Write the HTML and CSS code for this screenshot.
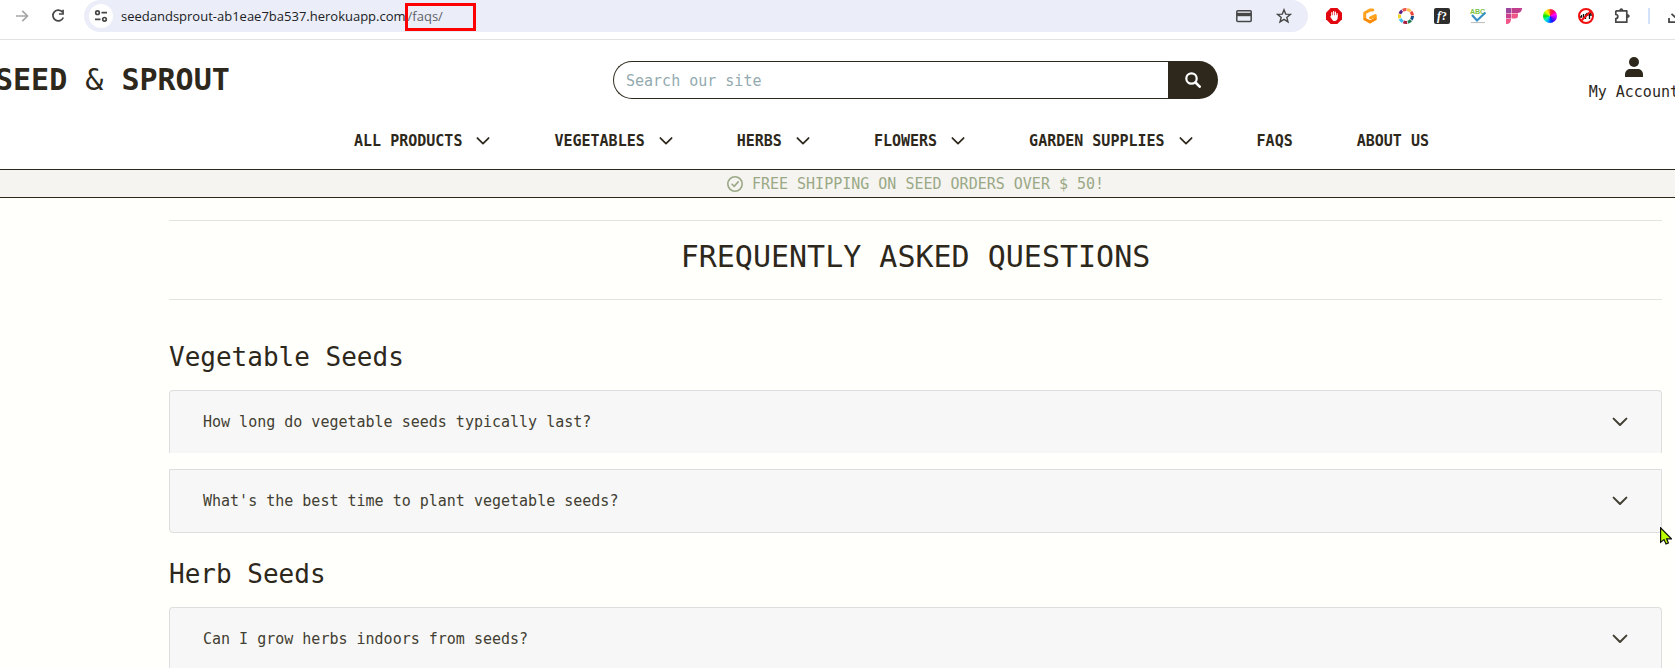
FILE: index.html
```html
<!DOCTYPE html>
<html lang="en">
<head>
<meta charset="utf-8">
<title>FAQs | Seed &amp; Sprout</title>
<link rel="stylesheet" href="styles.css">
</head>
<body>
<svg class="defs" aria-hidden="true">
  <symbol id="chevron" viewBox="0 0 16 16"><path d="M1.600 4.600 8 11l6.400-6.400" fill="none" stroke="currentColor" stroke-width="2" stroke-linecap="round" stroke-linejoin="round"/></symbol>
</svg>
<div class="toolbar">
  <div class="history">
    <button class="tool dim" aria-label="Forward"><svg viewBox="0 0 16 16"><path d="M2 8h11M8.300 2.800 13.500 8l-5.200 5.200" fill="none" stroke="currentColor" stroke-width="1.700"/></svg></button>
    <button class="tool" aria-label="Reload"><svg viewBox="0 0 16 16"><path d="M12.600 4.200A5.400 5.400 0 1 0 13.300 9.500" fill="none" stroke="currentColor" stroke-width="1.700"/><path d="M13.900 1.800v5H8.900V5.200h3.300V1.800z" fill="currentColor"/></svg></button>
  </div>
  <div class="address">
    <button class="site-info" aria-label="Site information"><svg viewBox="0 0 16 16" fill="none" stroke="currentColor" stroke-width="1.700"><circle cx="4.500" cy="4.700" r="1.800"/><path d="M8.500 4.700H14M2 11.300h5.500"/><circle cx="11.500" cy="11.300" r="1.800"/></svg></button>
    <span class="url">seedandsprout-ab1eae7ba537.herokuapp.com<span class="path">/faqs/<span class="marker"></span></span></span>
    <div class="address-actions">
      <button class="tool" aria-label="Payment methods"><svg viewBox="0 0 16 16"><rect x=".8" y="2.800" width="14.400" height="10.800" rx="1" fill="none" stroke="currentColor" stroke-width="1.500"/><path d="M1 4.800h14v3.400H1z" fill="currentColor"/></svg></button>
      <button class="tool" aria-label="Bookmark"><svg viewBox="0 0 16 16"><path d="m8 1.800 1.700 4.300 4.700.3-3.600 3 1.200 4.500L8 11.400l-4 2.500 1.200-4.500-3.600-3 4.700-.3z" fill="none" stroke="currentColor" stroke-width="1.400"/></svg></button>
    </div>
  </div>
  <div class="extensions">
    <button class="tool" aria-label="Ad blocker"><svg viewBox="0 0 16 16"><path d="M4.700 0h6.600L16 4.700v6.600L11.300 16H4.700L0 11.300V4.700z" fill="#e2070f"/><path d="M5.800 8V4.500M7.600 7.500V3.500M9.400 7.500V4M11.100 8V5.500" stroke="#fff" stroke-width="1.200" stroke-linecap="round"/><path d="M5.200 7.200h6.500v2.300c0 2-1.200 3.600-3 3.600-1.600 0-2.200-.8-3-2.100L4.200 8.700c.3-.6.700-.3 1-.1z" fill="#fff"/></svg></button>
    <button class="tool" aria-label="Writing helper"><svg viewBox="0 0 16 16"><path d="M10.800 2 8.300 1.900 2.700 5v6L8 14l5.300-3V7.500L8.500 9.800" fill="none" stroke="#ffa31f" stroke-width="3" stroke-linejoin="round" stroke-linecap="round"/><path d="M2.700 11 8 14l5.300-3" fill="none" stroke="#f98b10" stroke-width="2.400" stroke-linejoin="round" stroke-linecap="round"/></svg></button>
    <button class="tool" aria-label="Ring"><svg viewBox="0 0 16 16" fill="none" stroke-width="3"><g stroke-dasharray="3.800 40"><circle cx="8" cy="8" r="6.500" stroke="#184f86"/><circle cx="8" cy="8" r="6.500" stroke="#277d54" transform="rotate(40 8 8)"/><circle cx="8" cy="8" r="6.500" stroke="#a52045" transform="rotate(80 8 8)"/><circle cx="8" cy="8" r="6.500" stroke="#37bdf2" transform="rotate(120 8 8)"/><circle cx="8" cy="8" r="6.500" stroke="#f4d22d" transform="rotate(160 8 8)"/><circle cx="8" cy="8" r="6.500" stroke="#5a2187" transform="rotate(200 8 8)"/><circle cx="8" cy="8" r="6.500" stroke="#ef5448" transform="rotate(240 8 8)"/><circle cx="8" cy="8" r="6.500" stroke="#ffbc55" transform="rotate(280 8 8)"/><circle cx="8" cy="8" r="6.500" stroke="#ef4438" transform="rotate(320 8 8)"/></g></svg></button>
    <button class="tool font-tool" aria-label="Font finder"><i>f</i>?</button>
    <button class="tool" aria-label="Spell check"><svg viewBox="0 0 16 16"><text x="0" y="5.500" class="abc">ABC</text><path d="m2 7 5 5.500 8.500-8" fill="none" stroke="#3790c5" stroke-width="2.200"/><path d="M1 14.600h14" stroke="#b9b9b9"/></svg></button>
    <button class="tool" aria-label="Fireshot"><svg viewBox="0 0 16 16"><path d="M0 0h5v5H0z" fill="#9c469e"/><path d="M5.500 0H16c0 3-2 5-5 5H5.500z" fill="#c13e8d"/><path d="M0 5.500h5v5H0z" fill="#ca408e"/><path d="M5.500 5.500H12v2c0 2-1 3-3 3H5.500z" fill="#ed5687"/><path d="M0 11h5c0 3-1.500 5-5 5z" fill="#f0568a"/></svg></button>
    <button class="tool" aria-label="Colour picker"><span class="wheel"></span></button>
    <button class="tool" aria-label="Font blocker"><svg viewBox="0 0 16 16"><path d="M1.500 9h2V7m2 3V6m2 5V7l2-2m-1 2h2m1 4V6l2-1m-2 2h4" fill="none" stroke="#111" stroke-width="1.300"/><circle cx="8" cy="8" r="7" fill="none" stroke="#f01010" stroke-width="2"/><path d="m3 13 10-10" stroke="#f01010" stroke-width="2"/></svg></button>
    <button class="tool" aria-label="Extensions"><svg viewBox="0 0 16 16"><path d="M1.800 2.800h11v3.300M12.800 9.900v4.300h-11v-3.700c2.700 0 2.700-4 0-4V2.800M12.800 6v4" fill="none" stroke="currentColor" stroke-width="1.700" stroke-linejoin="round"/><path d="M5.300 2.500C5.300-.4 9.300-.4 9.300 2.500zM13 6c3.600 0 3.600 4 0 4z" fill="currentColor"/></svg></button>
    <span class="separator"></span>
    <button class="tool" aria-label="Downloads"><svg viewBox="0 0 16 16"><path d="M8 1.500V9M3.500 5.800 8 10l4.500-4.200M1 10v4.200h14V10" fill="none" stroke="currentColor" stroke-width="1.800"/></svg></button>
  </div>
</div>

<header class="header">
  <div class="masthead">
    <a class="logo" href="#"><b>SEED</b> &amp; <b>SPROUT</b></a>
    <form class="search">
      <input type="search" placeholder="Search our site" aria-label="Search our site">
      <button type="button" aria-label="Search"><svg viewBox="0 0 16 16"><circle cx="6.500" cy="6.500" r="5.200" fill="none" stroke="currentColor" stroke-width="2.200"/><path d="m10.500 10.500 4.200 4.200" stroke="currentColor" stroke-width="2.600" stroke-linecap="round"/></svg></button>
    </form>
    <a class="account" href="#"><svg viewBox="0 0 18 20"><circle cx="9" cy="5" r="5" fill="currentColor"/><path d="M0 20v-2.500C0 14 2.500 12 5.500 12h7c3 0 5.500 2 5.500 5.500V20z" fill="currentColor"/></svg>My Account</a>
  </div>
  <nav class="nav">
    <a href="#">ALL PRODUCTS<svg><use href="#chevron"/></svg></a>
    <a href="#">VEGETABLES<svg><use href="#chevron"/></svg></a>
    <a href="#">HERBS<svg><use href="#chevron"/></svg></a>
    <a href="#">FLOWERS<svg><use href="#chevron"/></svg></a>
    <a href="#">GARDEN SUPPLIES<svg><use href="#chevron"/></svg></a>
    <a href="#">FAQS</a>
    <a href="#">ABOUT US</a>
  </nav>
</header>

<div class="banner"><svg viewBox="0 0 16 16" fill="none" stroke="currentColor"><circle cx="8" cy="8" r="7.200" stroke-width="1.600"/><path d="m5 8.200 2.200 2.200 4-4.500" stroke-width="1.600" stroke-linecap="round"/></svg>FREE SHIPPING ON SEED ORDERS OVER $ 50!</div>

<main class="content">
  <h1>FREQUENTLY ASKED QUESTIONS</h1>
  <section>
    <h2>Vegetable Seeds</h2>
    <div class="accordion">
      <button>How long do vegetable seeds typically last?<svg><use href="#chevron"/></svg></button>
      <button>What's the best time to plant vegetable seeds?<svg><use href="#chevron"/></svg></button>
    </div>
  </section>
  <section>
    <h2>Herb Seeds</h2>
    <div class="accordion">
      <button>Can I grow herbs indoors from seeds?<svg><use href="#chevron"/></svg></button>
    </div>
  </section>
</main>
<svg class="pointer" viewBox="0 0 12 18" aria-hidden="true"><path d="M.6.800v14.400l3.400-2.600 2 4.400 2.400-1-1.800-4.200h4.800z" fill="#b9ff00" stroke="#111" stroke-width="1.200"/></svg>
</body>
</html>
```
FILE: styles.css
```css
* { box-sizing: border-box; }

body {
  margin: 0;
  height: 100vh;
  overflow: hidden;
  background: #fffffb;
  color: #2d281b;
  font: 15px/20px "DejaVu Sans Mono", monospace;
}

a { color: inherit; text-decoration: none; }
button { padding: 0; border: 0; background: none; color: inherit; font: inherit; }
svg { flex: none; }
.defs { display: none; }

/* Browser toolbar */
.toolbar {
  display: flex;
  height: 40px;
  overflow: hidden;
  padding-bottom: 7px;
  border-bottom: 1px solid #dfe1e3;
  background: #fff;
  color: #474747;
}
.tool { flex: none; display: flex; width: 16px; height: 16px; }
.tool svg { width: 16px; height: 16px; }
.dim { color: #a6a6a6; }
.history { flex: none; display: flex; align-items: center; gap: 20px; width: 84px; padding-left: 14px; }
.address {
  flex: 1;
  display: flex;
  align-items: center;
  padding: 0 16px 0 5px;
  border-radius: 16px;
  background: #ebeef8;
}
.site-info {
  display: flex;
  align-items: center;
  justify-content: center;
  width: 24px;
  height: 24px;
  border-radius: 50%;
  background: #fff;
}
.site-info svg { width: 16px; height: 16px; }
.url { margin-left: 8px; color: #202124; font: 13px/20px "Open Sans", sans-serif; }
.path { position: relative; padding-left: 2px; color: #5f6368; }
.marker {
  position: absolute;
  top: -4px;
  left: -1px;
  width: 71px;
  height: 28px;
  border: 3px solid #f00;
}
.address-actions { display: flex; gap: 24px; margin-left: auto; }
.extensions { flex: none; display: flex; align-items: center; gap: 20px; width: 367px; padding-left: 18px; }
.font-tool {
  align-items: center;
  justify-content: center;
  border-radius: 2px;
  background: #2d2d2d;
  color: #fff;
  font: bold 12px/16px "Liberation Serif", serif;
}
.abc { fill: #7cc142; font: bold 7px "Liberation Sans", sans-serif; }
.wheel {
  width: 14px;
  height: 14px;
  margin: 1px;
  border-radius: 50%;
  background: conic-gradient(#f33, #f06 40deg, #f0f 75deg, #80f 120deg, #02f 165deg, #0af 200deg, #0fa 235deg, #0d0 270deg, #9f0 300deg, #ff0 325deg, #f80);
}
.separator { flex: none; width: 2px; height: 16px; margin: 0 -2px; background: #d3e1fb; }

/* Shop header */
.header { height: 129px; background: #fff; }
.masthead {
  display: grid;
  grid-template-columns: 613fr 605fr 457fr;
  padding-top: 16px;
}
.logo { margin: 4px 0 0 -5px; font-size: 30px; line-height: 40px; white-space: pre; }
.search { display: flex; height: 38px; margin-top: 5px; }
.search input {
  flex: 1;
  min-width: 0;
  padding: 1px 12px 0;
  border: 1px solid #2d281b;
  border-right: 0;
  border-radius: 19px 0 0 19px;
  background: #fff;
  color: inherit;
  font: inherit;
}
.search input::placeholder { color: #93aab0; opacity: 1; }
.search button {
  display: flex;
  align-items: center;
  justify-content: center;
  width: 50px;
  border-radius: 0 19px 19px 0;
  background: #2d281b;
  color: #fff;
}
.search button svg { width: 16px; height: 16px; }
.account {
  display: flex;
  flex-direction: column;
  align-items: center;
  gap: 5px;
  justify-self: end;
  margin-right: -4px;
  white-space: nowrap;
}
.account svg { width: 18px; height: 20px; margin-top: 1px; }
.nav {
  display: flex;
  justify-content: center;
  gap: 64px;
  margin-top: 29px;
  padding-left: 108px;
  font-weight: bold;
}
.nav a { display: flex; align-items: center; gap: 14px; white-space: nowrap; }
.nav svg { width: 14px; height: 14px; }

.banner {
  display: flex;
  align-items: center;
  justify-content: center;
  gap: 9px;
  height: 29px;
  padding-left: 156px;
  border: solid #2d281b;
  border-width: 1px 0;
  background: #f5f4f0;
  color: #9aa886;
}
.banner svg { width: 16px; height: 16px; }

/* Questions */
.content { padding: 22px 13px 0 169px; }
h1 {
  margin: 0 0 41px;
  padding: 16px 0 22px;
  border: solid #e3e3e0;
  border-width: 1px 0;
  font-size: 30px;
  font-weight: 400;
  line-height: 40px;
  text-align: center;
}
h2 { margin: 0 0 17px; font-size: 26px; font-weight: 400; line-height: 32px; }
.accordion { display: flex; flex-direction: column; gap: 16px; margin-bottom: 25px; }
.accordion button {
  display: flex;
  align-items: center;
  justify-content: space-between;
  padding: 21px 33px;
  border: 1px solid #dededf;
  background: #f7f7f7;
  color: #423e32;
  text-align: left;
}
.accordion button:first-child { border-bottom: 0; border-radius: 4px 4px 0 0; }
.accordion button:last-child { border-radius: 0 0 4px 4px; }
.accordion button:only-child { border-radius: 4px; }
.accordion svg { width: 16px; height: 16px; }

.pointer { position: absolute; top: 527px; right: 3px; width: 12px; height: 18px; }
```
